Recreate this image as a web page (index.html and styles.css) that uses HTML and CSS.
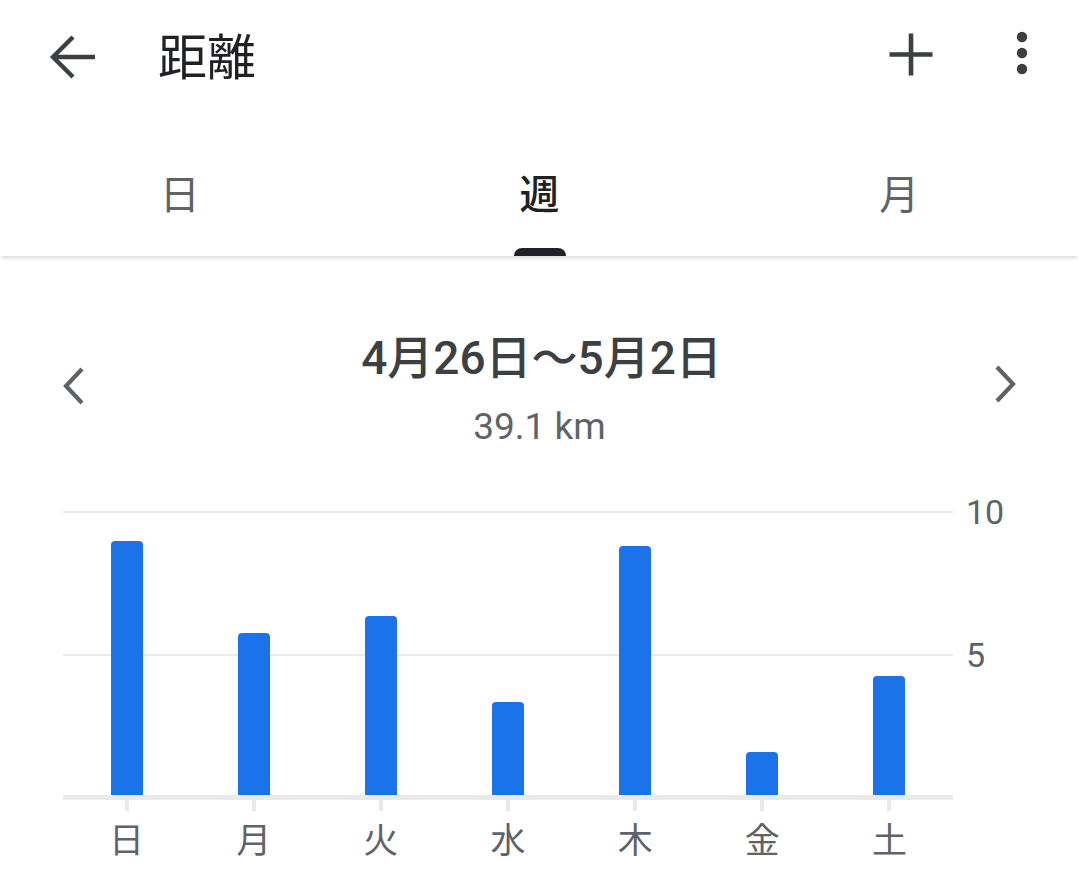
FILE: index.html
```html
<!DOCTYPE html>
<html lang="ja">
<head>
<meta charset="utf-8">
<link rel="stylesheet" href="styles.css">
</head>
<body>
<div class="app">
  <header class="appbar">
    <button class="icon-btn back" aria-label="戻る">
      <svg width="64" height="64" viewBox="0 0 64 64"><path d="M24 12 L4 32 L24 52 M4 32 H46" fill="none" stroke="#3c4043" stroke-width="4.4" stroke-linejoin="miter"/></svg>
    </button>
    <h1 class="title">距離</h1>
    <div class="spacer"></div>
    <button class="icon-btn add" aria-label="追加">
      <svg width="64" height="64" viewBox="0 0 64 64"><path d="M32 10.5 V52.5 M10.5 31.5 H53.5" fill="none" stroke="#3c4043" stroke-width="4.6"/></svg>
    </button>
    <button class="icon-btn more" aria-label="その他">
      <svg width="64" height="64" viewBox="0 0 64 64" fill="#3c4043"><circle cx="32" cy="15" r="5.2"/><circle cx="32" cy="31" r="5.2"/><circle cx="32" cy="47" r="5.2"/></svg>
    </button>
  </header>

  <nav class="tabs">
    <div class="tab">日</div>
    <div class="tab active">週<span class="indicator"></span></div>
    <div class="tab">月</div>
  </nav>

  <main class="content">
    <section class="range">
      <button class="chev" aria-label="前へ">
        <svg width="40" height="48" viewBox="0 0 40 48"><path d="M28 7 L12 24 L28 41" fill="none" stroke="#5f6368" stroke-width="4.2"/></svg>
      </button>
      <div class="range-text">
        <div class="range-date">4月26日～5月2日</div>
        <div class="range-total">39.1 km</div>
      </div>
      <button class="chev" aria-label="次へ">
        <svg width="40" height="48" viewBox="0 0 40 48"><path d="M12 5 L28 22 L12 39" fill="none" stroke="#5f6368" stroke-width="4.2"/></svg>
      </button>
    </section>

    <section class="chart">
      <div class="chart-main">
        <div class="plot">
          <div class="col"><div class="bar" style="height:254px"></div></div>
          <div class="col"><div class="bar" style="height:162px"></div></div>
          <div class="col"><div class="bar" style="height:179px"></div></div>
          <div class="col"><div class="bar" style="height:93px"></div></div>
          <div class="col"><div class="bar" style="height:249px"></div></div>
          <div class="col"><div class="bar" style="height:43px"></div></div>
          <div class="col"><div class="bar" style="height:119px"></div></div>
        </div>
        <div class="xaxis">
          <div class="xcol"><span class="tick"></span><span class="xlabel">日</span></div>
          <div class="xcol"><span class="tick"></span><span class="xlabel">月</span></div>
          <div class="xcol"><span class="tick"></span><span class="xlabel">火</span></div>
          <div class="xcol"><span class="tick"></span><span class="xlabel">水</span></div>
          <div class="xcol"><span class="tick"></span><span class="xlabel">木</span></div>
          <div class="xcol"><span class="tick"></span><span class="xlabel">金</span></div>
          <div class="xcol"><span class="tick"></span><span class="xlabel">土</span></div>
        </div>
      </div>
      <div class="yaxis">
        <div class="ylabel">10</div>
        <div class="ylabel">5</div>
      </div>
    </section>
  </main>
</div>
</body>
</html>
```

FILE: styles.css
```css
* { box-sizing: border-box; }
html, body { margin: 0; padding: 0; background: #fff; }
body {
  width: 1079px;
  height: 883px;
  overflow: hidden;
  font-family: Roboto, "Noto Sans CJK JP", sans-serif;
  color: #202124;
}
button {
  border: 0;
  background: none;
  padding: 0;
  margin: 0;
  display: flex;
  align-items: center;
  justify-content: center;
}

.appbar {
  height: 114px;
  display: flex;
  align-items: center;
}
.icon-btn { width: 64px; height: 64px; }
.back { margin-left: 49px; margin-top: -1px; }
.title {
  margin: 0 0 0 45px;
  font-family: "Noto Sans CJK JP", sans-serif;
  font-size: 49px;
  font-weight: 400;
  line-height: 60px;
  color: #202124;
  margin-top: -6px;
}
.spacer { flex: 1; }
.add { margin-right: 47px; margin-top: -4px; }
.more { margin-right: 25px; margin-top: -6px; }

.tabs {
  height: 142px;
  display: flex;
  box-shadow: 0 4px 4px -2px rgba(60, 64, 67, 0.2);
  position: relative;
  z-index: 1;
}
.tab {
  flex: 1;
  display: flex;
  justify-content: center;
  padding-top: 50px;
  font-family: "Noto Sans CJK JP", sans-serif;
  font-size: 40px;
  line-height: 56px;
  color: #5f6368;
  position: relative;
}
.tab.active { color: #202124; font-weight: 500; }
.indicator {
  position: absolute;
  bottom: 0;
  left: 50%;
  width: 52px;
  margin-left: -26px;
  height: 8px;
  border-radius: 8px 8px 0 0;
  background: #202124;
}

.range {
  display: flex;
  align-items: center;
  margin-top: 72px;
  padding: 0 54px 0 54px;
}
.chev { width: 40px; height: 48px; margin-top: -6px; }
.range-text {
  flex: 1;
  display: flex;
  flex-direction: column;
  align-items: center;
}
.range-date {
  font-size: 46px;
  font-weight: 500;
  line-height: 60px;
  color: #3c4043;
  padding-left: 4px;
}
.range-total {
  margin-top: 17px;
  font-size: 37px;
  line-height: 44px;
  color: #5f6368;
}

.chart {
  display: flex;
  margin-top: 62px;
  padding-left: 63px;
}
.chart-main { width: 890px; }
.plot {
  height: 289px;
  display: flex;
  align-items: flex-end;
  border-bottom: 5px solid #e8eaed;
  background:
    linear-gradient(#e8eaed, #e8eaed) no-repeat 0 0 / 100% 2px,
    linear-gradient(#e8eaed, #e8eaed) no-repeat 0 143px / 100% 2px;
}
.col {
  flex: 1;
  display: flex;
  justify-content: center;
}
.bar {
  width: 32px;
  background: #1a73e8;
  border-radius: 4px 4px 0 0;
}
.xaxis { display: flex; }
.xcol {
  flex: 1;
  display: flex;
  flex-direction: column;
  align-items: center;
}
.tick {
  width: 4px;
  height: 11px;
  background: #e8eaed;
}
.xlabel {
  margin-top: 7px;
  font-family: "Noto Sans CJK JP", sans-serif;
  font-size: 35px;
  line-height: 40px;
  color: #5f6368;
}
.yaxis {
  margin-left: 13px;
  margin-top: -19px;
  display: flex;
  flex-direction: column;
  gap: 103px;
}
.ylabel {
  font-size: 34px;
  line-height: 40px;
  color: #5f6368;
}
```
